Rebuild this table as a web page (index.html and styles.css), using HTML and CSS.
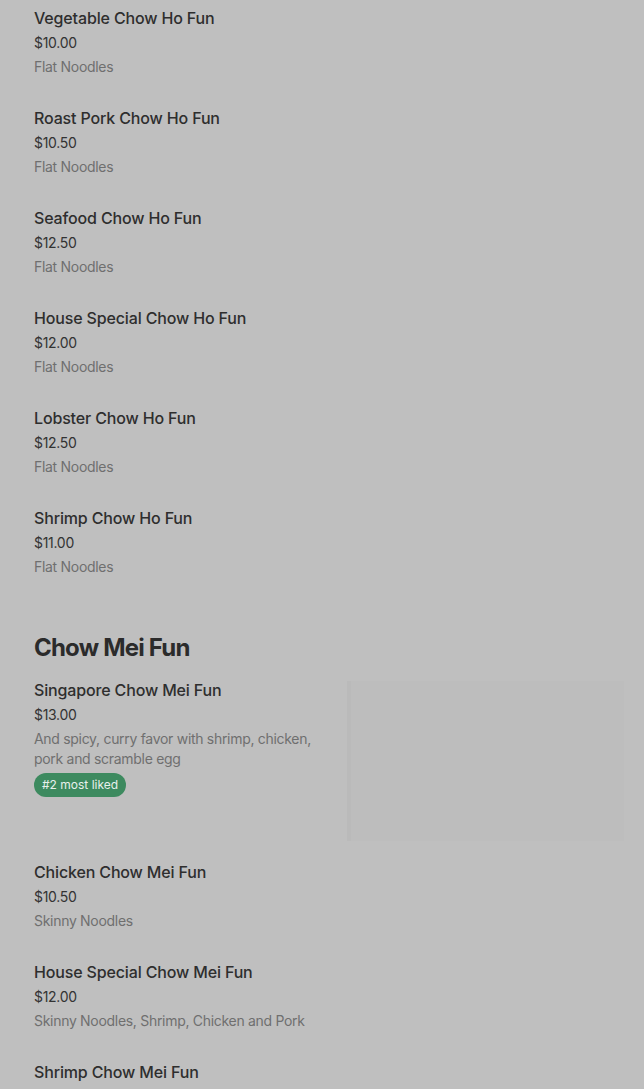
FILE: index.html
```html
<!DOCTYPE html>
<html lang="en">
<head>
    <meta charset="UTF-8">
    <meta name="viewport" content="width=device-width, initial-scale=1.0">
    <title>Menu</title>
    <link rel="stylesheet" href="styles.css">
</head>
<body>
    <div class="menu">
        <div class="item">
            <div class="info">
                <div class="name">Vegetable Chow Ho Fun</div>
                <div class="price">$10.00</div>
                <div class="desc">Flat Noodles</div>
            </div>
        </div>
        <div class="item">
            <div class="info">
                <div class="name">Roast Pork Chow Ho Fun</div>
                <div class="price">$10.50</div>
                <div class="desc">Flat Noodles</div>
            </div>
        </div>
        <div class="item">
            <div class="info">
                <div class="name">Seafood Chow Ho Fun</div>
                <div class="price">$12.50</div>
                <div class="desc">Flat Noodles</div>
            </div>
        </div>
        <div class="item">
            <div class="info">
                <div class="name">House Special Chow Ho Fun</div>
                <div class="price">$12.00</div>
                <div class="desc">Flat Noodles</div>
            </div>
        </div>
        <div class="item">
            <div class="info">
                <div class="name">Lobster Chow Ho Fun</div>
                <div class="price">$12.50</div>
                <div class="desc">Flat Noodles</div>
            </div>
        </div>
        <div class="item">
            <div class="info">
                <div class="name">Shrimp Chow Ho Fun</div>
                <div class="price">$11.00</div>
                <div class="desc">Flat Noodles</div>
            </div>
        </div>

        <h2 class="section-title">Chow Mei Fun</h2>

        <div class="item item-photo">
            <div class="info">
                <div class="name">Singapore Chow Mei Fun</div>
                <div class="price">$13.00</div>
                <div class="desc">And spicy, curry favor with shrimp, chicken, pork and scramble egg</div>
                <span class="badge">#2 most liked</span>
            </div>
            <div class="photo"></div>
        </div>
        <div class="item">
            <div class="info">
                <div class="name">Chicken Chow Mei Fun</div>
                <div class="price">$10.50</div>
                <div class="desc">Skinny Noodles</div>
            </div>
        </div>
        <div class="item">
            <div class="info">
                <div class="name">House Special Chow Mei Fun</div>
                <div class="price">$12.00</div>
                <div class="desc">Skinny Noodles, Shrimp, Chicken and Pork</div>
            </div>
        </div>
        <div class="item">
            <div class="info">
                <div class="name">Shrimp Chow Mei Fun</div>
            </div>
        </div>
    </div>
</body>
</html>
```

FILE: styles.css
```css
body {
    margin: 0;
    background-color: #bfbfbf;
    font-family: Inter, "Noto Sans", sans-serif;
    color: #2e2e2e;
}

.menu {
    padding: 7px 20px 0 34px;
}

.item {
    display: flex;
    gap: 16px;
    padding-bottom: 30px;
}

.info {
    flex: 1;
}

.name {
    font-size: 16px;
    font-weight: 500;
    line-height: 22px;
    letter-spacing: -0.15px;
    color: #2e2e2e;
}

.price {
    margin-top: 4px;
    font-size: 14px;
    line-height: 20px;
    color: #333;
    letter-spacing: -0.3px;
}

.desc {
    margin-top: 4px;
    font-size: 14px;
    line-height: 20px;
    letter-spacing: -0.3px;
    color: #6f6f6f;
}

.section-title {
    margin: 25px 0 15px;
    font-size: 24px;
    font-weight: 700;
    line-height: 32px;
    letter-spacing: -0.8px;
    color: #2b2b2b;
}

.item-photo {
    padding-bottom: 20px;
}

.item-photo .info {
    max-width: 297px;
}

.badge {
    display: inline-block;
    margin-top: 4px;
    padding: 0 8px;
    height: 24px;
    line-height: 24px;
    border-radius: 12px;
    background-color: #3d8a5f;
    color: #e8f0eb;
    font-size: 12px;
}

.photo {
    width: 277px;
    height: 160px;
    margin-top: 2px;
    background-color: #bdbdbd;
    border-left: 4px solid #bababa;
    box-sizing: border-box;
}
```
